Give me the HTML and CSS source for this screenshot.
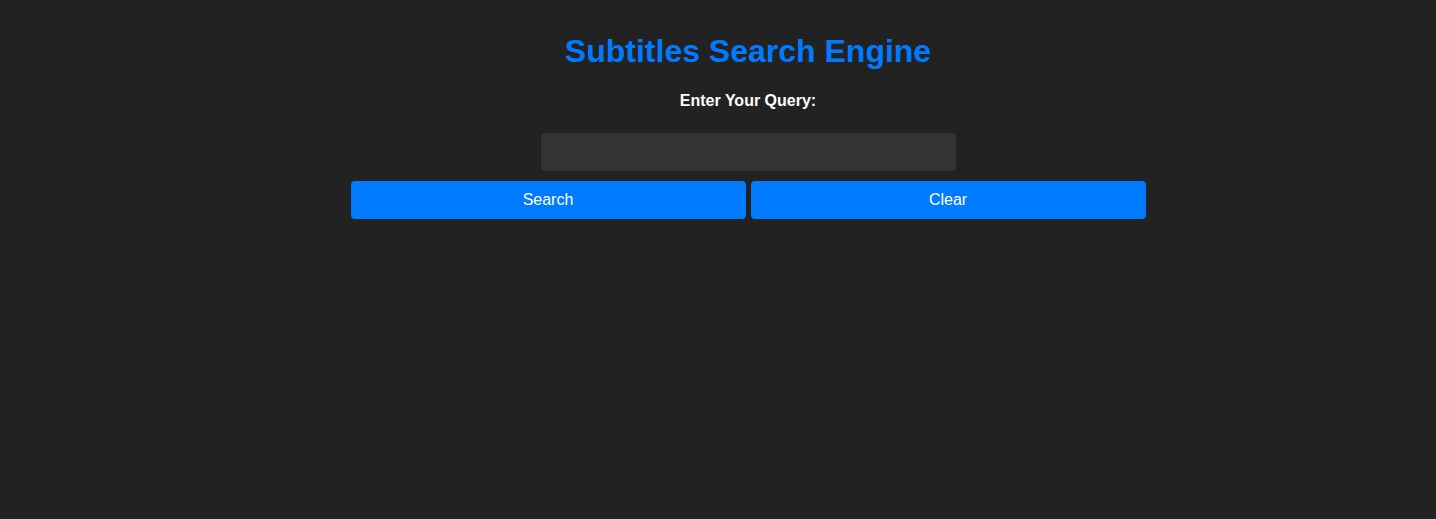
FILE: index.html
```html
<!DOCTYPE html>
<html lang="en">
<head>
<meta charset="utf-8">
<title>Subtitles Search Engine</title>
<link rel="stylesheet" href="styles.css">
</head>
<body>
<main class="page">
  <h1 class="title">Subtitles Search Engine</h1>
  <form class="search-form">
    <label class="label" for="query">Enter Your Query:</label>
    <input class="query-input" id="query" type="text">
    <div class="actions">
      <button class="btn" type="button">Search</button>
      <button class="btn" type="button">Clear</button>
    </div>
  </form>
</main>
</body>
</html>
```

FILE: styles.css
```css
html, body {
  margin: 0;
  padding: 0;
  background: #222222;
  height: 100%;
}

body {
  font-family: "Liberation Sans", Arial, sans-serif;
  color: #ffffff;
  padding-left: 60px;
  box-sizing: border-box;
}

.page {
  display: flex;
  flex-direction: column;
  align-items: center;
  padding-top: 33px;
}

.title {
  margin: 0;
  font-size: 32px;
  line-height: 37px;
  font-weight: bold;
  color: #007bff;
}

.search-form {
  display: flex;
  flex-direction: column;
  align-items: center;
  width: 795px;
}

.label {
  margin-top: 22px;
  font-size: 16px;
  line-height: 18px;
  font-weight: bold;
  color: #ffffff;
}

.query-input {
  margin-top: 23px;
  width: 415px;
  height: 38px;
  box-sizing: border-box;
  border: none;
  border-radius: 4px;
  background: #333333;
  color: #ffffff;
  font-family: inherit;
  font-size: 16px;
  padding: 0 10px;
  outline: none;
}

.actions {
  margin-top: 10px;
  display: flex;
  gap: 5px;
  width: 100%;
}

.btn {
  flex: 1;
  height: 38px;
  border: none;
  border-radius: 4px;
  background: #007bff;
  color: #ffffff;
  font-family: inherit;
  font-size: 16px;
  cursor: pointer;
}
```
